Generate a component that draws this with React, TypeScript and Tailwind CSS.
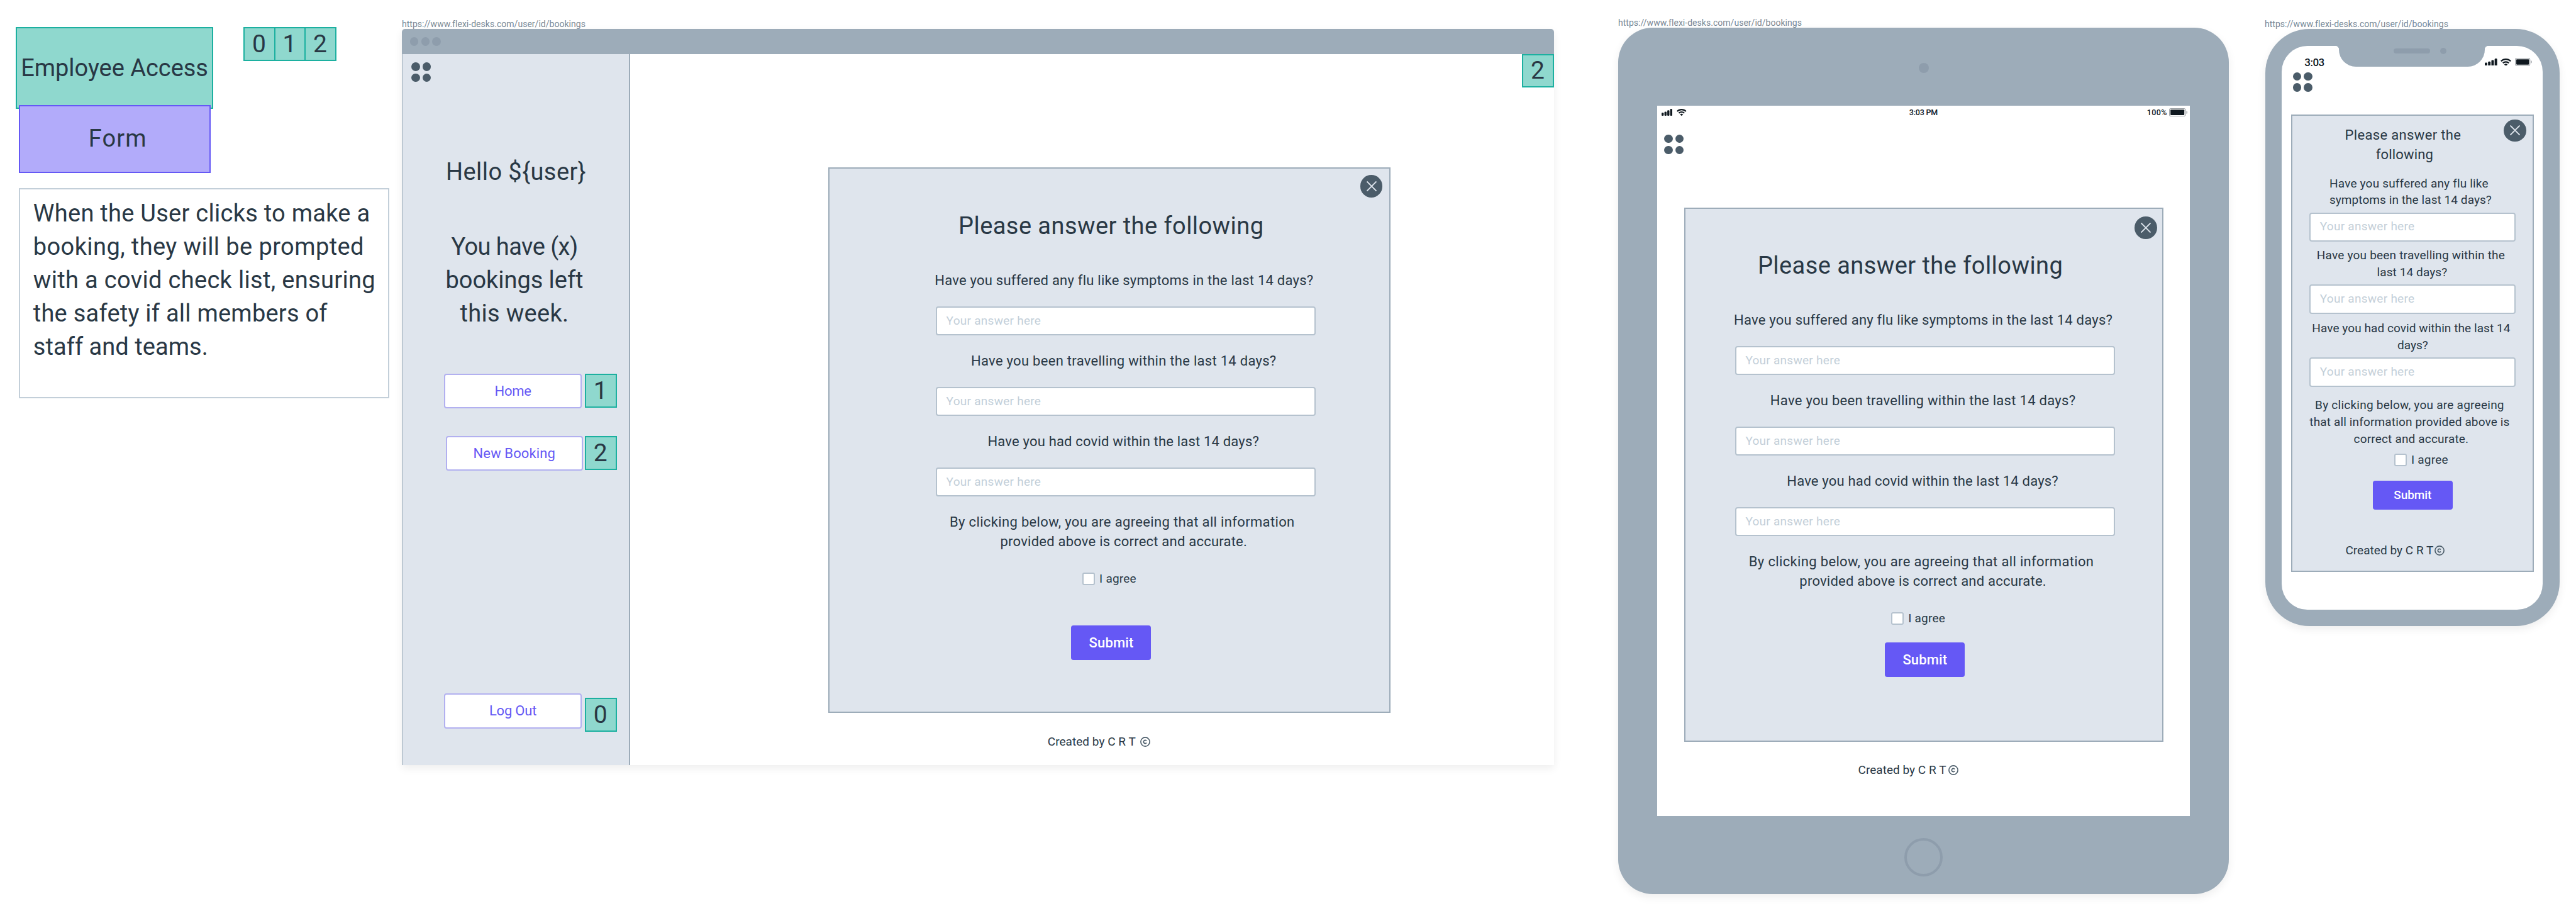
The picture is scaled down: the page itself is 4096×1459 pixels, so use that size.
import type { ReactNode } from "react";

const URL_LABEL = "https://www.flexi-desks.com/user/id/bookings";

function Tag({ value, className = "" }: { value: string; className?: string }) {
  return (
    <div
      className={`flex w-[50.6px] items-center justify-center border-2 border-[#1cb0a0] bg-[#8fd8ce] pr-[1.5px] text-[39px] leading-none ${className}`}
    >
      {value}
    </div>
  );
}

function Dots({ className = "" }: { className?: string }) {
  return (
    <div className={`grid w-[31px] shrink-0 grid-cols-2 gap-[4.3px] ${className}`}>
      {[0, 1, 2, 3].map((i) => (
        <span key={i} className="size-[13.3px] rounded-full bg-[#4b5c69]" />
      ))}
    </div>
  );
}

function Signal({ className = "" }: { className?: string }) {
  return (
    <svg viewBox="0 0 30 20" preserveAspectRatio="none" className={className} fill="#0f181f">
      <rect x="0" y="11" width="6" height="9" rx="2.4" />
      <rect x="8" y="8" width="6" height="12" rx="2.4" />
      <rect x="16" y="4" width="6" height="16" rx="2.4" />
      <rect x="24" y="0" width="6" height="20" rx="2.4" />
    </svg>
  );
}

function Wifi({ className = "" }: { className?: string }) {
  return (
    <svg viewBox="0 0 28 20" preserveAspectRatio="none" className={className} fill="none">
      <path d="M1.4 7.2A18 18 0 0 1 26.6 7.2" stroke="#0f181f" strokeWidth="3.8" />
      <path d="M6.2 12.2A11 11 0 0 1 21.8 12.2" stroke="#0f181f" strokeWidth="3.8" />
      <path d="M9.6 16.2A6.2 6.2 0 0 1 18.4 16.2L14 20.2Z" fill="#0f181f" />
    </svg>
  );
}

function Battery({ className = "" }: { className?: string }) {
  return (
    <svg viewBox="0 0 53 24" preserveAspectRatio="none" className={className}>
      <rect x="1" y="1" width="46" height="22" rx="4.5" fill="none" stroke="#9a9fa4" strokeWidth="2" />
      <rect x="4" y="4" width="40" height="16" rx="2" fill="#0f181f" />
      <path d="M50 7.5Q53 8.5 53 12T50 16.5Z" fill="#9a9fa4" />
    </svg>
  );
}

function Close({ className = "" }: { className?: string }) {
  return (
    <button
      aria-label="Close"
      className={`absolute flex size-[35.5px] items-center justify-center rounded-full bg-[#4b5c69] ${className}`}
    >
      <svg viewBox="0 0 16 16" className="size-[16px]" stroke="#dfe5ed" strokeWidth="1.9">
        <path d="M0.5 0.5L15.5 15.5M15.5 0.5L0.5 15.5" />
      </svg>
    </button>
  );
}

function Created({ className = "", gap }: { className?: string; gap: string }) {
  return (
    <div className={`flex items-center text-[19px] leading-[24px] tracking-[0.0017em] whitespace-nowrap ${gap} ${className}`}>
      <span>Created by C R T</span>
      <svg viewBox="0 0 16 16" className="size-[16px]" fill="none" stroke="#4b5c69">
        <circle cx="8" cy="8" r="7.1" strokeWidth="1.6" />
        <path d="M10 6.4A2.6 2.6 0 1 0 10 9.6" strokeWidth="1.7" />
      </svg>
    </div>
  );
}

function Answer({ className = "" }: { className?: string }) {
  return (
    <div
      className={`flex h-[46.3px] w-full items-center rounded-[4px] border-2 border-[#b5c2ce] bg-white pl-[14.3px] text-[19px] tracking-[0.0143em] whitespace-nowrap text-[#c3cfd9] ${className}`}
    >
      Your answer here
    </div>
  );
}

function Agree({ className = "" }: { className?: string }) {
  return (
    <label className={`flex h-[20px] items-center gap-[7px] text-[19px] leading-[20px] tracking-[0.011em] whitespace-nowrap ${className}`}>
      <span className="size-[20px] rounded-[3px] border-2 border-[#b5c2ce] bg-white" />
      I agree
    </label>
  );
}

function Line({ className = "", children }: { className?: string; children: ReactNode }) {
  return <p className={`flex justify-center whitespace-nowrap ${className}`}>{children}</p>;
}

function WideForm({ agree, submit }: { agree: string; submit: string }) {
  return (
    <div className="w-[604px] text-[22px] leading-[31px]">
      <Line className="w-[557px] text-[38px] leading-[53px] tracking-[0.0115em]">Please answer the following</Line>
      <Line className="mt-[44.3px] w-[598px] tracking-[0.0106em]">
        Have you suffered any flu like symptoms in the last 14 days?
      </Line>
      <Answer className="mt-[25.2px]" />
      <Line className="mt-[25.4px] w-[597px] tracking-[0.013em]">Have you been travelling within the last 14 days?</Line>
      <Answer className="mt-[25.3px]" />
      <Line className="mt-[25.4px] w-[596px] tracking-[0.0083em]">Have you had covid within the last 14 days?</Line>
      <Answer className="mt-[25.3px]" />
      <Line className="mt-[25.5px] w-[592px] tracking-[0.0156em]">By clicking below, you are agreeing that all information</Line>
      <Line className="w-[597px] tracking-[0.0101em]">provided above is correct and accurate.</Line>
      <Agree className={`mt-[33.7px] ${agree}`} />
      <button
        className={`flex h-[55px] w-[127px] items-center justify-center rounded-[4px] bg-[#6558f5] text-[22px] font-medium tracking-[0.0055em] text-white ${submit}`}
      >
        Submit
      </button>
    </div>
  );
}

function Notes() {
  return (
    <div className="absolute top-[43px] left-[25.3px] flex flex-col items-start text-[38px] leading-[53px]">
      <div className="flex h-[130.3px] w-[313.5px] items-center justify-center border-2 border-[#1cb0a0] bg-[#8fd8ce] tracking-[-0.0011em] whitespace-nowrap">
        Employee Access
      </div>
      <div className="-mt-[6.4px] ml-[4.5px] flex h-[107.6px] w-[305.7px] items-center justify-center border-2 border-[#6558f5] bg-[#b2abfa] pl-[9px] tracking-[0.0293em]">
        Form
      </div>
      <div className="mt-[24.7px] ml-[4.5px] h-[333.4px] w-[589.4px] border-2 border-[#c3cfd9] bg-white pt-[12.3px] pl-[21px] whitespace-nowrap">
        <p className="tracking-[0.0069em]">When the User clicks to make a</p>
        <p className="tracking-[0.0107em]">booking, they will be prompted</p>
        <p className="tracking-[0.0085em]">with a covid check list, ensuring</p>
        <p className="tracking-[0.0061em]">the safety if all members of</p>
        <p className="tracking-[0.0011em]">staff and teams.</p>
      </div>
    </div>
  );
}

function NavButton({ className = "", children }: { className?: string; children: ReactNode }) {
  return (
    <button
      className={`flex h-[55.3px] w-[218.5px] items-center justify-center rounded-[4px] border-2 border-[#b2b0f0] bg-white text-[22px] text-[#6558f5] ${className}`}
    >
      {children}
    </button>
  );
}

function Sidebar() {
  return (
    <aside className="flex w-[363px] shrink-0 flex-col border-r-2 border-l border-[#9dacb9] bg-[#dfe5ed]">
      <Dots className="mt-[13.4px] ml-[14.4px]" />
      <Line className="mt-[116.9px] pl-[1px] text-[38px] leading-[53px] tracking-[0.0115em]">{"Hello ${user}"}</Line>
      <div className="mt-[66.2px] pr-[4px] text-[38px] leading-[53px]">
        <Line className="tracking-[-0.0146em]">You have (x)</Line>
        <Line className="tracking-[-0.0014em]">bookings left</Line>
        <Line className="tracking-[0.008em]">this week.</Line>
      </div>
      <div className="mt-[68.2px] ml-[66.3px] flex items-start gap-[5.4px]">
        <NavButton className="tracking-[-0.0126em]">Home</NavButton>
        <Tag value="1" className="mt-[0.5px] h-[54.2px]" />
      </div>
      <div className="mt-[43.9px] ml-[68.5px] flex items-start gap-[3.2px]">
        <NavButton className="tracking-[0.005em]">New Booking</NavButton>
        <Tag value="2" className="mt-[0.5px] h-[54.2px]" />
      </div>
      <div className="mt-[354.3px] ml-[66.3px] flex items-start gap-[5.4px]">
        <NavButton className="tracking-[-0.0096em]">Log Out</NavButton>
        <Tag value="0" className="mt-[6.7px] h-[54.4px]" />
      </div>
    </aside>
  );
}

function BrowserWindow() {
  return (
    <section className="absolute top-[46px] left-[639px] flex h-[1170px] w-[1832px] flex-col rounded-t-[5px] bg-white shadow-[0_5px_14px_rgba(0,0,0,0.07)]">
      <header className="flex h-[40px] shrink-0 items-center gap-[4.3px] rounded-t-[5px] bg-[#9dacb9] pl-[13.2px]">
        <span className="size-[13.3px] rounded-full bg-[#8e9dac]" />
        <span className="size-[13.3px] rounded-full bg-[#8e9dac]" />
        <span className="size-[13.3px] rounded-full bg-[#8e9dac]" />
      </header>
      <div className="flex flex-1">
        <Sidebar />
        <main className="relative flex flex-1 flex-col items-start">
          <Tag value="2" className="absolute top-0 right-0 h-[53px]" />
          <div className="relative mt-[180px] ml-[315.4px] h-[867.2px] w-[893.9px] border-2 border-[#9dacb9] bg-[#dfe5ed] pt-[65.2px] pl-[168.9px]">
            <Close className="top-[10px] right-[11px]" />
            <WideForm agree="ml-[232.8px]" submit="mt-[63.7px] ml-[215.2px]" />
          </div>
          <Created className="mt-[33.5px] ml-[663.8px]" gap="gap-[7px]" />
        </main>
      </div>
    </section>
  );
}

function Tablet() {
  return (
    <section className="absolute top-[44px] left-[2573.2px] flex h-[1377.2px] w-[971px] flex-col items-center rounded-[55px] bg-[#9dacb9] shadow-[0_5px_14px_rgba(0,0,0,0.07)]">
      <span className="mt-[56.2px] size-[16px] shrink-0 rounded-full bg-[#8e9dac]" />
      <div className="mt-[51.5px] h-[1129.8px] w-[847.6px] shrink-0 bg-white">
        <div className="grid h-[22.4px] grid-cols-3 items-center pr-[4.5px] pl-[7px] text-[12.5px] leading-none font-medium text-[#0f181f]">
          <div className="flex items-center gap-[7.5px]">
            <Signal className="h-[11px] w-[17px]" />
            <Wifi className="h-[11px] w-[15.6px]" />
          </div>
          <div className="pr-[3px] text-center tracking-[-0.0146em]">3:03 PM</div>
          <div className="flex items-center justify-end gap-[3px]">
            <span className="tracking-[0.029em]">100%</span>
            <Battery className="h-[13.2px] w-[29.2px]" />
          </div>
        </div>
        <Dots className="mt-[24px] ml-[11.5px]" />
        <div className="relative mt-[84.9px] ml-[43.1px] h-[849.4px] w-[761.9px] border-2 border-[#9dacb9] bg-[#dfe5ed] pt-[64.2px] pl-[79.1px]">
          <Close className="top-[12.2px] right-[8px]" />
          <WideForm agree="ml-[248.2px]" submit="mt-[28.3px] ml-[238.2px]" />
        </div>
        <Created className="mt-[33.1px] ml-[319.6px]" gap="gap-[3.8px]" />
      </div>
      <span className="mt-[34.3px] size-[61.4px] shrink-0 rounded-full border-[4.6px] border-[#8e9dac]" />
    </section>
  );
}

function PhoneForm() {
  return (
    <div className="w-[327.7px] text-[19px] leading-[26.6px]">
      <div className="text-[22px] leading-[30.8px]">
        <Line className="w-[297px] tracking-[0.0155em]">Please answer the</Line>
        <Line className="w-[302px] tracking-[0.0075em]">following</Line>
      </div>
      <Line className="mt-[17.2px] w-[316px] tracking-[0.0094em]">Have you suffered any flu like</Line>
      <Line className="w-[321px] tracking-[0.0037em]">symptoms in the last 14 days?</Line>
      <Answer className="mt-[5.6px]" />
      <Line className="mt-[9px] w-[322px] tracking-[0.0107em]">Have you been travelling within the</Line>
      <Line className="w-[326px] tracking-[0.0058em]">last 14 days?</Line>
      <Answer className="mt-[6.2px]" />
      <Line className="mt-[10.7px] w-[323px] tracking-[0.0037em]">Have you had covid within the last 14</Line>
      <Line className="w-[328px]">days?</Line>
      <Answer className="mt-[5.9px]" />
      <Line className="mt-[16.7px] w-[318px] tracking-[0.0131em]">By clicking below, you are agreeing</Line>
      <Line className="w-[318px] tracking-[0.0076em]">that all information provided above is</Line>
      <Line className="w-[323px] tracking-[0.009em]">correct and accurate.</Line>
      <Agree className="mt-[9.5px] ml-[134.6px]" />
      <button className="mt-[23px] ml-[100.5px] flex h-[46.4px] w-[126.8px] items-center justify-center rounded-[4px] bg-[#6558f5] font-medium tracking-[-0.0036em] text-white">
        Submit
      </button>
      <Created className="mt-[53.2px] ml-[57px]" gap="gap-[2px]" />
    </div>
  );
}

function Phone() {
  return (
    <section className="absolute top-[46.3px] left-[3601.8px] flex h-[948.7px] w-[467.9px] flex-col items-center rounded-[70px] bg-[#9dacb9] pt-[26.7px] shadow-[0_5px_14px_rgba(0,0,0,0.07)]">
      <div className="h-[895.9px] w-[414.8px] rounded-[41px] bg-white">
        <div className="flex h-[33px] items-start">
          <div className="w-[90.3px] pt-[16px] pl-[36px] text-[17px] leading-[20px] font-medium tracking-[-0.0315em] text-[#0f181f]">
            3:03
          </div>
          <div className="relative flex h-[33px] w-[232.8px] items-start rounded-b-[27px] bg-[#9dacb9] pl-[87.5px]">
            <span className="absolute top-0 -left-[5px] size-[5px] bg-[radial-gradient(circle_at_0%_100%,transparent_4.6px,#9dacb9_5.2px)]" />
            <span className="absolute top-0 -right-[5px] size-[5px] bg-[radial-gradient(circle_at_100%_100%,transparent_4.6px,#9dacb9_5.2px)]" />
            <span className="mt-[4.3px] h-[7.6px] w-[58.2px] rounded-full bg-[#8e9dac]" />
            <span className="mt-[3px] ml-[15.3px] size-[10.2px] rounded-full bg-[#8e9dac]" />
          </div>
          <div className="flex h-[51px] items-center">
            <Signal className="h-[11.9px] w-[19.6px]" />
            <Wifi className="ml-[5.3px] h-[11.9px] w-[17px]" />
            <Battery className="ml-[5.4px] h-[12.8px] w-[26.8px]" />
          </div>
        </div>
        <Dots className="mt-[8.7px] ml-[17.5px]" />
        <div className="relative mt-[36.6px] ml-[14.2px] h-[727.1px] w-[386.3px] border-2 border-[#9dacb9] bg-[#dfe5ed] pt-[15.9px] pl-[27.9px]">
          <Close className="top-[5.5px] right-[10px]" />
          <PhoneForm />
        </div>
      </div>
    </section>
  );
}

export default function App() {
  return (
    <div className="relative h-[1459px] w-[4096px] overflow-hidden bg-white font-['Roboto',sans-serif] font-normal text-[#293845]">
      <Notes />
      <div className="absolute top-[43.2px] left-[387.3px] flex">
        <Tag value="0" className="h-[54px]" />
        <Tag value="1" className="-ml-[2px] h-[54px]" />
        <Tag value="2" className="-ml-[2px] h-[54px]" />
      </div>
      <BrowserWindow />
      <p className="absolute top-[28px] left-[639px] text-[14px] leading-[20px] tracking-[0.002em] text-[#788896]">{URL_LABEL}</p>
      <Tablet />
      <p className="absolute top-[26px] left-[2573px] text-[14px] leading-[20px] tracking-[0.002em] text-[#788896]">{URL_LABEL}</p>
      <Phone />
      <p className="absolute top-[28px] left-[3601px] text-[14px] leading-[20px] tracking-[0.002em] text-[#788896]">{URL_LABEL}</p>
    </div>
  );
}
